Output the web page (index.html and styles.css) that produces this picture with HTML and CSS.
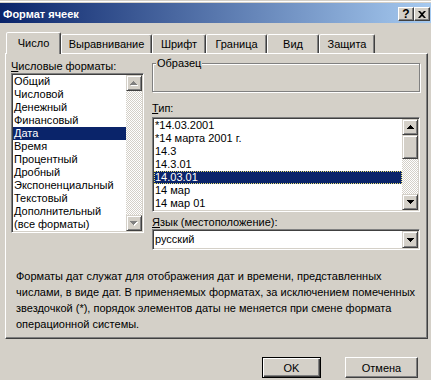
FILE: index.html
```html
<!DOCTYPE html>
<html>
<head>
  <title>Формат ячеек</title>
  <link rel="stylesheet" href="styles.css">
</head>
<body>
  <div class="dialog">
    <div class="titlebar">
      <span class="title">Формат ячеек</span>
      <div class="caption-buttons">
        <div class="caption-btn help">?</div>
        <div class="caption-btn">
          <svg width="8" height="7" viewBox="0 0 8 7"><path d="M0 0h2l2 2 2-2h2L5 3.5 8 7H6L4 5 2 7H0l3-3.5z" fill="#000"/></svg>
        </div>
      </div>
    </div>

    <div class="tabs">
      <div class="tab active tab-number">Число</div>
      <div class="tab tab-align">Выравнивание</div>
      <div class="tab tab-font">Шрифт</div>
      <div class="tab tab-border">Граница</div>
      <div class="tab tab-fill">Вид</div>
      <div class="tab tab-protect">Защита</div>
    </div>

    <div class="panel">
      <div class="main">
        <div class="left-col">
          <div class="field-label"><u>Ч</u>исловые форматы:</div>
          <div class="listbox formats-list">
            <div class="list-items">
              <div class="list-item">Общий</div>
              <div class="list-item">Числовой</div>
              <div class="list-item">Денежный</div>
              <div class="list-item">Финансовый</div>
              <div class="list-item selected">Дата</div>
              <div class="list-item">Время</div>
              <div class="list-item">Процентный</div>
              <div class="list-item">Дробный</div>
              <div class="list-item">Экспоненциальный</div>
              <div class="list-item">Текстовый</div>
              <div class="list-item">Дополнительный</div>
              <div class="list-item">(все форматы)</div>
            </div>
            <div class="scrollbar">
              <div class="scroll-btn">
                <svg width="8" height="5" viewBox="0 0 8 5"><path d="M4 1h1v1h1v1h1v1h1v1H1V4h1V3h1V2h1z" fill="#fff"/><path d="M3 0h1v1h1v1h1v1h1v1H0V3h1V2h1V1h1z" fill="#808080"/></svg>
              </div>
              <div class="scroll-track"></div>
              <div class="scroll-btn">
                <svg width="8" height="5" viewBox="0 0 8 5"><path d="M1 1h7v1H7v1H6v1H5v1H4V4H3V3H2V2H1z" fill="#fff"/><path d="M0 0h7v1H6v1H5v1H4v1H3V3H2V2H1V1H0z" fill="#808080"/></svg>
              </div>
            </div>
          </div>
        </div>

        <div class="right-col">
          <div class="groupbox">
            <div class="legend">Образец</div>
          </div>
          <div class="field-label type-label"><u>Т</u>ип:</div>
          <div class="listbox types-list">
            <div class="list-items">
              <div class="list-item">*14.03.2001</div>
              <div class="list-item">*14 марта 2001 г.</div>
              <div class="list-item">14.3</div>
              <div class="list-item">14.3.01</div>
              <div class="list-item selected focused">14.03.01</div>
              <div class="list-item">14 мар</div>
              <div class="list-item">14 мар 01</div>
            </div>
            <div class="scrollbar">
              <div class="scroll-btn">
                <svg width="7" height="4" viewBox="0 0 7 4"><path d="M3 0h1v1h1v1h1v1h1v1H0V3h1V2h1V1h1z" fill="#000"/></svg>
              </div>
              <div class="scroll-thumb"></div>
              <div class="scroll-track"></div>
              <div class="scroll-btn">
                <svg width="7" height="4" viewBox="0 0 7 4"><path d="M0 0h7v1H6v1H5v1H4v1H3V3H2V2H1V1H0z" fill="#000"/></svg>
              </div>
            </div>
          </div>
          <div class="field-label lang-label"><u>Я</u>зык (местоположение):</div>
          <div class="combo">
            <div class="combo-value">русский</div>
            <div class="scroll-btn combo-btn">
              <svg width="7" height="4" viewBox="0 0 7 4"><path d="M0 0h7v1H6v1H5v1H4v1H3V3H2V2H1V1H0z" fill="#000"/></svg>
            </div>
          </div>
        </div>
      </div>

      <p class="description">
        Форматы дат служат для отображения дат и времени, представленных<br>
        числами, в виде дат. В применяемых форматах, за исключением помеченных<br>
        звездочкой (*), порядок элементов даты не меняется при смене формата<br>
        операционной системы.
      </p>
    </div>

    <div class="buttons">
      <div class="btn btn-default">OK</div>
      <div class="btn btn-cancel">Отмена</div>
    </div>
  </div>
</body>
</html>
```

FILE: styles.css
```css
body {
  margin: 0;
  width: 431px;
  height: 380px;
  overflow: hidden;
  background: #d4d0c8;
  font-family: "Liberation Sans", Arial, sans-serif;
  font-size: 11px;
  color: #000;
}
.dialog {
  padding-top: 3px;
  box-shadow: inset 0 1px #d4d0c8, inset 0 2px #fff;
}

/* title bar */
.titlebar {
  height: 20px;
  display: flex;
  justify-content: space-between;
  padding-right: 1px;
  background: linear-gradient(to right, #0a246a, #a6caf0);
}
.title {
  color: #fff;
  font-weight: bold;
  padding: 3px 0 0 3px;
  line-height: 17px;
}
.caption-buttons {
  display: flex;
  padding-top: 4px;
}
.caption-btn {
  width: 16px;
  height: 14px;
  box-sizing: border-box;
  background: #d4d0c8;
  border: 1px solid;
  border-color: #fff #404040 #404040 #fff;
  box-shadow: inset -1px -1px #808080;
  display: flex;
  align-items: center;
  justify-content: center;
}
.caption-btn.help {
  font-weight: bold;
  font-size: 12px;
  line-height: 12px;
}

/* tabs */
.tabs {
  display: flex;
  align-items: flex-end;
  height: 21px;
  margin-top: 9px;
  padding-left: 6px;
  position: relative;
  z-index: 1;
}
.tab {
  height: 19px;
  box-sizing: border-box;
  border: 1px solid;
  border-bottom: none;
  border-color: #fff #404040 transparent #fff;
  border-radius: 2px 2px 0 0;
  box-shadow: inset -1px 0 #808080;
  background: #d4d0c8;
  display: flex;
  align-items: center;
  justify-content: center;
}
.tab.active {
  height: 22px;
  margin-bottom: -1px;
  padding-bottom: 2px;
}
.tab-number { width: 55px; }
.tab-align { width: 91px; }
.tab-font { width: 54px; }
.tab-border { width: 61px; }
.tab-fill { width: 52px; }
.tab-protect { width: 56px; }

/* tab page */
.panel {
  margin-left: 5px;
  width: 423px;
  height: 286px;
  box-sizing: border-box;
  border: 1px solid;
  border-color: #fff #404040 #404040 #fff;
  box-shadow: inset -1px -1px #808080;
  padding: 6px 0 0 5px;
}
.main {
  display: flex;
  gap: 8px;
}
.left-col {
  width: 133px;
}
.right-col {
  width: 268px;
}
.field-label {
  height: 13px;
  line-height: 13px;
  white-space: nowrap;
}
.type-label {
  margin-top: 10px;
}
.lang-label {
  margin-top: 4px;
}

/* group box */
.groupbox {
  margin-top: 3px;
  height: 29px;
  box-sizing: border-box;
  border: 1px solid #808080;
  box-shadow: inset 1px 1px #fff, 1px 1px #fff;
}
.legend {
  width: fit-content;
  margin: -7px 0 0 3px;
  padding: 0 1px;
  line-height: 13px;
  background: #d4d0c8;
}

/* list boxes */
.listbox,
.combo {
  display: flex;
  box-sizing: border-box;
  background: #fff;
  border: 1px solid;
  border-color: #808080 #fff #fff #808080;
  box-shadow: inset 1px 1px #404040, inset -1px -1px #d4d0c8;
  padding: 1px;
}
.formats-list {
  height: 160px;
}
.types-list {
  height: 95px;
  margin-top: 2px;
}
.list-items {
  flex: 1;
  min-width: 0;
}
.list-item {
  height: 13px;
  line-height: 13px;
  padding-left: 1px;
  white-space: nowrap;
}
.list-item.selected {
  background: #0a246a;
  color: #fff;
}
.list-item.focused {
  outline: 1px dotted #e8e070;
  outline-offset: -1px;
}

/* scroll bars */
.scrollbar {
  width: 16px;
  display: flex;
  flex-direction: column;
}
.scroll-btn,
.scroll-thumb {
  box-sizing: border-box;
  background: #d4d0c8;
  border: 1px solid;
  border-color: #d4d0c8 #404040 #404040 #d4d0c8;
  box-shadow: inset 1px 1px #fff, inset -1px -1px #808080;
}
.scroll-btn {
  height: 16px;
  display: flex;
  align-items: center;
  justify-content: center;
}
.scroll-thumb {
  height: 24px;
}
.scroll-track {
  flex: 1;
  background: repeating-conic-gradient(#d4d0c8 0 25%, #fff 0 50%) 0 0 / 2px 2px;
}

/* combo box */
.combo {
  height: 21px;
}
.combo-value {
  flex: 1;
  line-height: 17px;
  padding-left: 1px;
}
.combo-btn {
  width: 16px;
  height: 17px;
}

.description {
  margin: 18px 0 0;
  padding-left: 5px;
  line-height: 16px;
  white-space: nowrap;
}

/* dialog buttons */
.buttons {
  display: flex;
  justify-content: flex-end;
  gap: 24px;
  margin-top: 18px;
  padding-right: 13px;
}
.btn {
  height: 21px;
  box-sizing: border-box;
  display: flex;
  align-items: center;
  justify-content: center;
  border: 1px solid;
  border-color: #fff #404040 #404040 #fff;
  box-shadow: inset -1px -1px #808080;
}
.btn-default {
  width: 59px;
  border-color: #000;
  box-shadow: inset 1px 1px #fff, inset -1px -1px #404040, inset -2px -2px #808080;
}
.btn-cancel {
  width: 73px;
}
```
